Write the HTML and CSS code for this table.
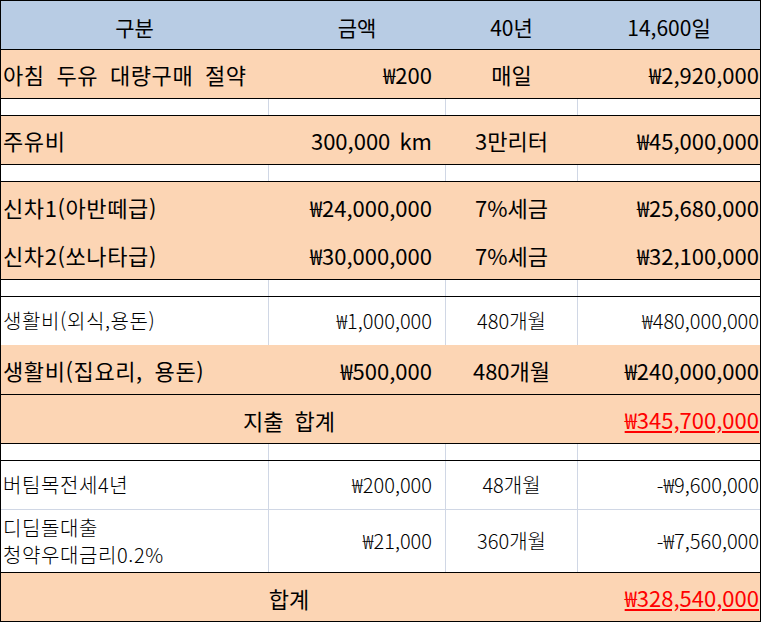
FILE: index.html
```html
<!DOCTYPE html>
<html lang="ko">
<head>
<meta charset="utf-8">
<title>40년 절약 계산</title>
<link rel="stylesheet" href="styles.css">
</head>
<body>
<div class="sheet">
  <div class="row head">
    <div class="c">구분</div><div class="c">금액</div><div class="c">40년</div><div class="c">14,600일</div>
  </div>
  <div class="row fill">
    <div class="c c1">아침 두유 대량구매 절약</div><div class="c c2">₩200</div><div class="c c3">매일</div><div class="c c4">₩2,920,000</div>
  </div>
  <div class="row white gap">
    <div class="c"></div><div class="c"></div><div class="c"></div><div class="c"></div>
  </div>
  <div class="row fill">
    <div class="c c1">주유비</div><div class="c c2">300,000 km</div><div class="c c3">3만리터</div><div class="c c4">₩45,000,000</div>
  </div>
  <div class="row white gap">
    <div class="c"></div><div class="c"></div><div class="c"></div><div class="c"></div>
  </div>
  <div class="row fill open">
    <div class="c c1">신차1(아반떼급)</div><div class="c c2">₩24,000,000</div><div class="c c3">7%세금</div><div class="c c4">₩25,680,000</div>
  </div>
  <div class="row fill">
    <div class="c c1">신차2(쏘나타급)</div><div class="c c2">₩30,000,000</div><div class="c c3">7%세금</div><div class="c c4">₩32,100,000</div>
  </div>
  <div class="row white gap">
    <div class="c"></div><div class="c"></div><div class="c"></div><div class="c"></div>
  </div>
  <div class="row white open short">
    <div class="c c1">생활비(외식,용돈)</div><div class="c c2">₩1,000,000</div><div class="c c3">480개월</div><div class="c c4">₩480,000,000</div>
  </div>
  <div class="row fill plus">
    <div class="c c1">생활비(집요리, 용돈)</div><div class="c c2">₩500,000</div><div class="c c3">480개월</div><div class="c c4">₩240,000,000</div>
  </div>
  <div class="row fill">
    <div class="c span3">지출 합계</div><div class="c c4 total">₩345,700,000</div>
  </div>
  <div class="row white gap">
    <div class="c"></div><div class="c"></div><div class="c"></div><div class="c"></div>
  </div>
  <div class="row white light">
    <div class="c c1">버팀목전세4년</div><div class="c c2">₩200,000</div><div class="c c3">48개월</div><div class="c c4">-₩9,600,000</div>
  </div>
  <div class="row white tall">
    <div class="c c1"><span class="lines"><span>디딤돌대출</span><span>청약우대금리0.2%</span></span></div><div class="c c2">₩21,000</div><div class="c c3">360개월</div><div class="c c4">-₩7,560,000</div>
  </div>
  <div class="row fill">
    <div class="c span3">합계</div><div class="c c4 total">₩328,540,000</div>
  </div>
</div>
</body>
</html>
```

FILE: styles.css
```css
* {
  box-sizing: border-box;
}

body {
  margin: 0;
  background: #ffffff;
  color: #000000;
  font-family: "Noto Sans CJK KR", "Noto Sans", sans-serif;
}

.sheet {
  width: 761px;
  display: flex;
  flex-direction: column;
  border-top: 1px solid #000;
  border-left: 1px solid #000;
  border-right: 1px solid #000;
}

.row {
  display: grid;
  grid-template-columns: 268px 177px 132px 182px;
  height: 49px;
  border-bottom: 1px solid #000;
}

.row.gap {
  height: 17px;
}

.row.open {
  border-bottom: none;
}

.row.short {
  height: 48px;
}

.row.plus {
  height: 50px;
}

.row.light {
  border-bottom-color: #d0d7e5;
}

.row.tall {
  height: 63px;
}

.c {
  display: flex;
  align-items: center;
  white-space: nowrap;
  line-height: 1;
  border-right: 1px solid transparent;
  word-spacing: 5px;
}

.c:last-child {
  border-right: none;
}

.head {
  background: #b8cce4;
  font-size: 21px;
}

.head .c {
  justify-content: center;
  padding-top: 5px;
}

.fill {
  background: #fcd5b4;
  font-size: 22px;
}

.white {
  background: #ffffff;
  font-size: 20px;
  font-weight: 300;
}

.white .c {
  border-right-color: #d0d7e5;
}

.white .c:last-child {
  border-right: none;
}

.c1 {
  padding-left: 2px;
  letter-spacing: 0.6px;
}

.c2 {
  justify-content: flex-end;
  padding-right: 13px;
  word-spacing: 3px;
}

.c3 {
  justify-content: center;
}

.c4 {
  justify-content: flex-end;
  padding-right: 1px;
}

.span3 {
  grid-column: span 3;
  justify-content: center;
  padding-top: 2px;
}

.total {
  color: #ff0000;
  text-decoration: underline;
  text-underline-offset: 2px;
}

.lines {
  display: flex;
  flex-direction: column;
  line-height: 27px;
}
```
